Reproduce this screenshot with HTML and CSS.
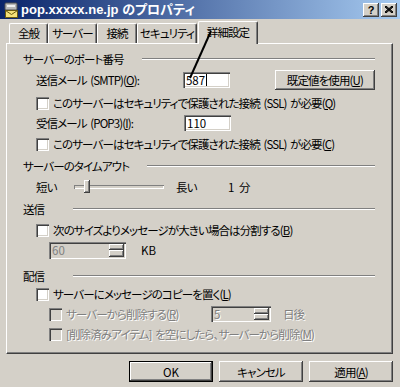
FILE: index.html
```html
<!DOCTYPE html>
<html lang="ja">
<head>
    <meta charset="UTF-8">
    <title>pop.xxxxx.ne.jp のプロパティ</title>
    <link rel="stylesheet" href="styles.css">
</head>
<body>
<div class="window">

    <!-- タイトルバー -->
    <div class="titlebar">
        <svg class="app-icon" viewBox="0 0 16 16">
            <rect x="2" y="1" width="12" height="7" rx="1" fill="#b8b8b8" stroke="#505050"/>
            <rect x="4" y="3" width="8" height="2" fill="#f0f0f0"/>
            <rect x="2.5" y="8.5" width="12" height="7" fill="#f6e27a" stroke="#6b5a10"/>
            <path d="M2.5 8.5 L8.5 12.5 L14.5 8.5" fill="none" stroke="#6b5a10"/>
        </svg>
        <span class="title">pop.xxxxx.ne.jp のプロパティ</span>
        <span class="cap-btn cap-help">?</span>
        <span class="cap-btn">
            <svg viewBox="0 0 8 7" width="8" height="7">
                <path d="M0 0 L8 7 M1 0 L8 6 M0 1 L7 7 M8 0 L0 7 M7 0 L0 6 M8 1 L1 7" stroke="#000" stroke-width="1"/>
            </svg>
        </span>
    </div>

    <!-- タブ -->
    <div class="tabs">
        <div class="tab">全般</div>
        <div class="tab">サーバー</div>
        <div class="tab">接続</div>
        <div class="tab">セキュリティ</div>
        <div class="tab active">詳細設定</div>
    </div>

    <div class="panel">

        <div class="group-title"><span>サーバーのポート番号</span><div class="etch"></div></div>

        <div class="row row-smtp">
            <span class="label">送信メール (SMTP)(<u>O</u>):</span>
            <div class="field port">587<span class="caret"></span></div>
            <div class="btn btn-default-val">既定値を使用(<u>U</u>)</div>
        </div>
        <div class="row row-chk1">
            <span class="check"></span>
            <span>このサーバーはセキュリティで保護された接続 (SSL) が必要(<u>Q</u>)</span>
        </div>
        <div class="row row-pop">
            <span class="label">受信メール (POP3)(<u>I</u>):</span>
            <div class="field port">110</div>
        </div>
        <div class="row row-chk2">
            <span class="check"></span>
            <span>このサーバーはセキュリティで保護された接続 (SSL) が必要(<u>C</u>)</span>
        </div>

        <div class="group-title gt-timeout"><span>サーバーのタイムアウト</span><div class="etch"></div></div>

        <div class="row row-slider">
            <span class="short">短い</span>
            <div class="slider">
                <div class="track"></div>
                <div class="thumb"></div>
            </div>
            <span class="long">長い</span>
            <span class="minutes">1 分</span>
        </div>

        <div class="group-title gt-send gt-short"><span>送信</span><div class="etch"></div></div>

        <div class="row row-chk3">
            <span class="check"></span>
            <span>次のサイズよりメッセージが大きい場合は分割する(<u>B</u>)</span>
        </div>
        <div class="row row-spin1">
            <div class="spin spin-kb">
                <span class="spin-val">60</span>
                <div class="spin-btns"><span class="up"></span><span class="down"></span></div>
            </div>
            <span class="unit-kb">KB</span>
        </div>

        <div class="group-title gt-deliver gt-short"><span>配信</span><div class="etch"></div></div>

        <div class="row row-chk4">
            <span class="check"></span>
            <span>サーバーにメッセージのコピーを置く(<u>L</u>)</span>
        </div>
        <div class="row row-sub1 disabled">
            <span class="check off"></span>
            <span class="sub-label">サーバーから削除する(<u>R</u>)</span>
            <div class="spin spin-days">
                <span class="spin-val">5</span>
                <div class="spin-btns"><span class="up"></span><span class="down"></span></div>
            </div>
            <span class="unit-days">日後</span>
        </div>
        <div class="row row-sub2 disabled">
            <span class="check off"></span>
            <span>[削除済みアイテム] を空にしたら、サーバーから削除(<u>M</u>)</span>
        </div>

    </div>

    <!-- ボタン -->
    <div class="dlg-buttons">
        <div class="btn btn-ok">OK</div>
        <div class="btn">キャンセル</div>
        <div class="btn">適用(<u>A</u>)</div>
    </div>

    <!-- 注釈の矢印 -->
    <svg class="annotation" width="400" height="387">
        <line x1="211" y1="31" x2="190" y2="78" stroke="#000" stroke-width="2"/>
    </svg>
</div>
</body>
</html>
```

FILE: styles.css
```css
* {
    box-sizing: border-box;
}
body {
    margin: 0;
    font-family: "Noto Sans CJK JP", sans-serif;
    font-size: 11.5px;
    letter-spacing: -0.9px;
    word-spacing: 2px;
    font-feature-settings: "palt";
    color: #000;
    background-color: #d4d0c8;
}
u {
    text-decoration: underline;
    text-underline-offset: 1px;
}
.window {
    position: relative;
    width: 400px;
    height: 387px;
    background-color: #d4d0c8;
    overflow: hidden;
}

/* タイトルバー */
.titlebar {
    height: 19px;
    display: flex;
    align-items: center;
    padding: 0 3px 0 3px;
    background: linear-gradient(to right, #0a246a, #a6caf0);
}
.app-icon {
    width: 16px;
    height: 16px;
    margin-right: 2px;
}
.title {
    flex: 1;
    color: #fff;
    font-family: "Liberation Sans", "Noto Sans CJK JP", sans-serif;
    font-weight: bold;
    font-size: 13px;
    letter-spacing: 0;
    word-spacing: 0;
    line-height: 19px;
}
.cap-btn {
    width: 16px;
    height: 14px;
    margin-left: 2px;
    display: flex;
    align-items: center;
    justify-content: center;
    background-color: #d4d0c8;
    box-shadow: inset -1px -1px #404040, inset 1px 1px #fff, inset -2px -2px #808080;
    font-family: "Liberation Sans", sans-serif;
    font-weight: bold;
    font-size: 11px;
    letter-spacing: 0;
    line-height: 14px;
}

/* タブ */
.tabs {
    display: flex;
    align-items: flex-end;
    height: 24px;
    padding-left: 9px;
    position: relative;
    z-index: 2;
}
.tab {
    height: 20px;
    line-height: 18px;
    text-align: center;
    border-top: 1px solid #fff;
    border-left: 1px solid #fff;
    border-right: 1px solid #404040;
    border-radius: 2px 2px 0 0;
    box-shadow: inset -1px 0 #808080;
    background-color: #d4d0c8;
}
.tab:nth-child(1) { width: 39px; }
.tab:nth-child(2) { width: 49px; }
.tab:nth-child(3) { width: 40px; }
.tab:nth-child(4) { width: 60px; }
.tab.active {
    width: 60px;
    height: 23px;
    margin-left: 1px;
    margin-bottom: -1px;
    line-height: 20px;
}

/* タブの中身 */
.panel {
    position: relative;
    z-index: 1;
    height: 311px;
    margin: 0 7px 0 6px;
    padding: 0 17px 0 16px;
    border-top: 1px solid #fff;
    border-left: 1px solid #fff;
    border-right: 1px solid #404040;
    border-bottom: 1px solid #404040;
    box-shadow: inset -1px -1px #808080;
}
.group-title {
    display: flex;
    align-items: center;
    height: 14px;
    margin-top: 8px;
}
.group-title .etch {
    flex: 1;
    height: 2px;
    margin-left: 18px;
    border-top: 1px solid #808080;
    border-bottom: 1px solid #fff;
}
.gt-short .etch {
    margin-left: 29px;
}
.gt-timeout { margin-top: 7px; }
.gt-send { margin-top: 5px; }
.gt-deliver { margin-top: 10px; }

.row {
    display: flex;
    align-items: center;
    height: 16px;
    margin-top: 4px;
    padding-left: 13px;
    white-space: nowrap;
}
.row-smtp { height: 20px; margin-top: 4px; }
.row-chk1 { margin-top: 5px; }
.row-pop { height: 20px; margin-top: 2px; }
.row-chk2 { margin-top: 3px; }
.row-slider { height: 20px; margin-top: 4px; }
.row-chk3 { margin-top: 6px; }
.row-spin1 { height: 18px; margin-top: 3px; padding-left: 26px; }
.row-chk4 { margin-top: 3px; }
.row-sub1, .row-sub2 { padding-left: 26px; }

.label {
    width: 148px;
}
.field {
    display: flex;
    align-items: center;
    height: 16px;
    background-color: #fff;
    padding: 0 3px;
    line-height: 16px;
    letter-spacing: 0;
    box-shadow: inset 1px 1px #808080, inset 2px 2px #404040, inset -1px -1px #fff, inset -2px -2px #d4d0c8;
}
.caret {
    width: 1px;
    height: 12px;
    margin-left: 1px;
    background-color: #000;
}
.port {
    width: 47px;
}

.btn {
    display: flex;
    align-items: center;
    justify-content: center;
    background-color: #d4d0c8;
    box-shadow: inset -1px -1px #404040, inset 1px 1px #fff, inset -2px -2px #808080;
}
.btn-default-val {
    width: 101px;
    height: 20px;
    margin-left: 45px;
}

.check {
    width: 13px;
    height: 13px;
    margin-right: 4px;
    flex-shrink: 0;
    background-color: #fff;
    box-shadow: inset 1px 1px #808080, inset 2px 2px #404040, inset -1px -1px #fff, inset -2px -2px #d4d0c8;
}
.check.off {
    background-color: #d4d0c8;
}
.disabled {
    color: #808080;
    text-shadow: 1px 1px #fff;
}

/* スライダー */
.short {
    width: 38px;
}
.slider {
    position: relative;
    width: 90px;
    height: 20px;
}
.track {
    position: absolute;
    left: 0;
    right: 0;
    top: 8px;
    height: 4px;
    box-shadow: inset 1px 1px #808080, inset -1px -1px #fff;
}
.thumb {
    position: absolute;
    left: 10px;
    top: 3px;
    width: 6px;
    height: 13px;
    background-color: #d4d0c8;
    box-shadow: inset -1px -1px #404040, inset 1px 1px #fff, inset -2px -2px #808080;
}
.long {
    margin-left: 12px;
    width: 52px;
}
.minutes {
    letter-spacing: 0;
}

/* スピンボックス */
.spin {
    display: flex;
    height: 17px;
    padding: 2px;
    background-color: #d4d0c8;
    box-shadow: inset 1px 1px #808080, inset 2px 2px #404040, inset -1px -1px #fff, inset -2px -2px #d4d0c8;
}
.spin-val {
    flex: 1;
    color: #808080;
    line-height: 13px;
    padding-left: 1px;
    letter-spacing: 0;
}
.spin-btns {
    width: 15px;
    display: flex;
    flex-direction: column;
}
.spin-btns span {
    flex: 1;
    box-shadow: inset -1px -1px #404040, inset 1px 1px #fff, inset -2px -2px #808080;
}
.spin-kb {
    width: 77px;
}
.unit-kb {
    margin-left: 15px;
    letter-spacing: 0;
}
.sub-label {
    width: 145px;
}
.spin-days {
    width: 60px;
    height: 16px;
}
.unit-days {
    margin-left: 12px;
}

/* ダイアログのボタン */
.dlg-buttons {
    display: flex;
    justify-content: flex-end;
    gap: 6px;
    padding: 7px 7px 0 0;
}
.dlg-buttons .btn {
    width: 84px;
    height: 21px;
}
.btn-ok {
    letter-spacing: 0;
    box-shadow: inset 0 0 0 1px #000, inset -2px -2px #404040, inset 2px 2px #fff, inset -3px -3px #808080;
}

.annotation {
    position: absolute;
    left: 0;
    top: 0;
    z-index: 5;
    pointer-events: none;
}
```
